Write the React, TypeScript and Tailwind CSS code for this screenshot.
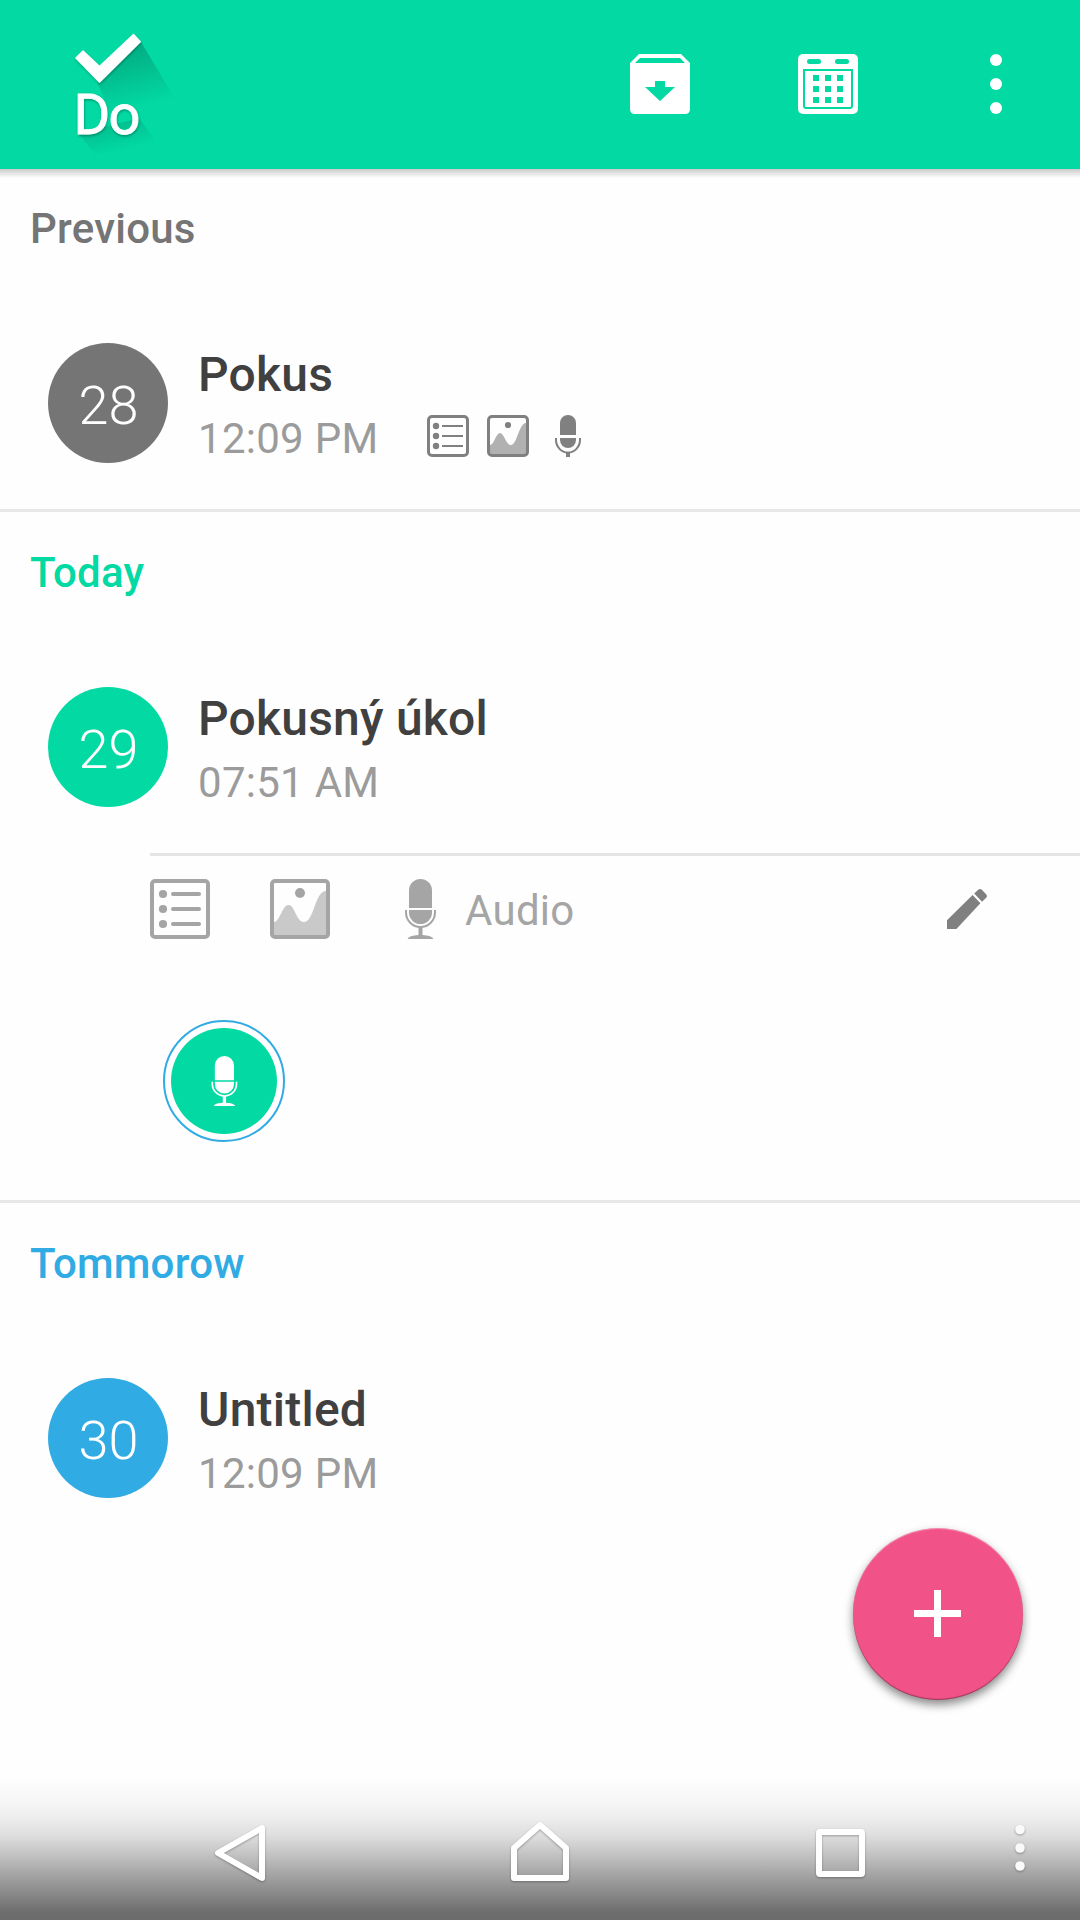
import React from "react";

type IconProps = { className?: string };

const Logo = () => (
  <svg className="w-[200px] h-[169px]" viewBox="0 0 200 169">
    <defs>
      <linearGradient id="checkShade" gradientUnits="userSpaceOnUse" x1="116" y1="58" x2="130" y2="110">
        <stop offset="0" stopColor="#000" stopOpacity="0.18" />
        <stop offset="1" stopColor="#000" stopOpacity="0" />
      </linearGradient>
      <linearGradient id="textShade" gradientUnits="userSpaceOnUse" x1="112" y1="118" x2="120" y2="151">
        <stop offset="0" stopColor="#000" stopOpacity="0.14" />
        <stop offset="1" stopColor="#000" stopOpacity="0" />
      </linearGradient>
      <filter id="soft" x="-20%" y="-20%" width="140%" height="140%">
        <feDropShadow dx="0.5" dy="1.5" stdDeviation="1.2" floodColor="#000" floodOpacity="0.3" />
      </filter>
    </defs>
    <path d="M141 42 L180 107 L114 121 L97 82 Z" fill="url(#checkShade)" />
    <path d="M139 118 L158 144 L96 156 L79 134 Z" fill="url(#textShade)" />
    <g fill="#fff" filter="url(#soft)">
      <path
        d="M76 58 L83 51 L99.5 66.5 L133.5 34.5 L140.2 41.7 L99.5 82 Z"
        stroke="#fff"
        strokeWidth="1.5"
        strokeLinejoin="round"
      />
      <text
        x="73.5"
        y="134"
        fontFamily="Roboto, sans-serif"
        fontWeight="400"
        fontSize="56"
        textLength="67"
        stroke="#fff"
        strokeWidth="0.8"
      >
        Do
      </text>
    </g>
  </svg>
);

const ArchiveIcon = () => (
  <svg className="w-[60px] h-[60px]" viewBox="0 0 60 60">
    <path
      fill="#fff"
      fillRule="evenodd"
      d="M9 0H51L60 9V55Q60 60 55 60H5Q0 60 0 55V9ZM10 4L5 9H55L50 4ZM25 27V33H15L30 47L45 33H35V27Z"
    />
  </svg>
);

const CalendarIcon = () => (
  <svg className="w-[60px] h-[60px]" viewBox="0 0 60 60">
    <rect width="60" height="60" rx="5" fill="#fff" />
    <g fill="#02d9a3">
      <rect x="9" y="5" width="14" height="5" rx="2.5" />
      <rect x="37" y="5" width="14" height="5" rx="2.5" />
      {[15, 27, 39].map((x) =>
        [21, 32, 43].map((y) => <rect key={`${x}-${y}`} x={x} y={y} width="6" height="6" />)
      )}
    </g>
    <path d="M6 16H54V52Q54 54 52 54H8Q6 54 6 52Z" fill="none" stroke="#02d9a3" strokeWidth="2" />
  </svg>
);

const MoreIcon = () => (
  <svg className="w-[12px] h-[60px]" viewBox="0 0 12 60" fill="#fff">
    <circle cx="6" cy="6" r="6" />
    <circle cx="6" cy="30" r="6" />
    <circle cx="6" cy="54" r="6" />
  </svg>
);

const SmallListIcon = () => (
  <svg className="w-[42px] h-[42px]" viewBox="0 0 42 42" fill="none" stroke="#808080">
    <rect x="1.5" y="1.5" width="39" height="39" rx="3.5" strokeWidth="3" />
    <path d="M15 11H36M15 21H36M15 31H36" strokeWidth="2" />
    <g fill="#808080" stroke="none">
      <circle cx="9" cy="11" r="3.2" />
      <circle cx="9" cy="21" r="3.2" />
      <circle cx="9" cy="31" r="3.2" />
    </g>
  </svg>
);

const SmallImageIcon = () => (
  <svg className="w-[42px] h-[42px]" viewBox="0 0 42 42">
    <path d="M3 30C7 30 9 18 13 18C17 18 19 30 24 30C30 30 32 8 39 8V39H3Z" fill="#b1b1b1" />
    <rect x="1.5" y="1.5" width="39" height="39" rx="3.5" fill="none" stroke="#808080" strokeWidth="3" />
    <circle cx="21" cy="10" r="3.1" fill="#808080" />
  </svg>
);

const SmallMicIcon = () => (
  <svg className="w-[42px] h-[42px]" viewBox="0 0 42 42" fill="#808080">
    <path d="M13 20V8A8 8 0 0 1 29 8V20ZM13 23H29V25A8 8 0 0 1 13 25ZM19 37H23V42H19Z" />
    <path d="M9 23V25A12 12.5 0 0 0 33 25V23" fill="none" stroke="#808080" strokeWidth="2" />
  </svg>
);

const ListIcon = () => (
  <svg className="w-[60px] h-[60px]" viewBox="0 0 60 60" fill="none" stroke="#a5a5a5" strokeWidth="4">
    <rect x="2" y="2" width="56" height="56" rx="3" />
    <path d="M23 15H49M23 30H49M23 45H49" strokeLinecap="round" />
    <g fill="#a5a5a5" stroke="none">
      <circle cx="13" cy="15" r="4.1" />
      <circle cx="13" cy="30" r="4.1" />
      <circle cx="13" cy="45" r="4.1" />
    </g>
  </svg>
);

const ImageIcon = () => (
  <svg className="w-[60px] h-[60px]" viewBox="0 0 60 60">
    <path d="M4 43C10 43 12 26 18.5 26C25 26 26 43 34 43C44 43 45 12 56 12V56H4Z" fill="#c9c9c9" />
    <rect x="2" y="2" width="56" height="56" rx="3" fill="none" stroke="#a5a5a5" strokeWidth="4" />
    <circle cx="30" cy="14" r="5" fill="#a5a5a5" />
  </svg>
);

const MicIcon = ({ className }: IconProps) => (
  <svg className={className} viewBox="0 0 60 60" fill="currentColor">
    <path d="M19 29V11.5A11.5 11.5 0 0 1 42 11.5V29ZM19 31H42V33.5A11.5 11.5 0 0 1 19 33.5ZM28.5 48H32.5V56Q42 56.5 43.5 60H17.5Q19 56.5 28.5 56Z" />
    <path d="M16 31V33.5A14.5 14.5 0 0 0 45 33.5V31" fill="none" stroke="currentColor" strokeWidth="2" />
  </svg>
);

const PencilIcon = () => (
  <svg className="w-[40px] h-[40px]" viewBox="0 0 40 40" fill="#808080">
    <path d="M0 31.2L25.6 6L33.4 14.2L9.4 40H0ZM27.2 4.4L31.2 0.8Q33 -0.6 34.8 0.8L39.2 5.2Q40.6 7 39.2 8.8L35 12.8Z" />
  </svg>
);

const smallIcons = (
  <div className="flex gap-[18px] ml-[47px] mb-[6px]">
    <SmallListIcon />
    <SmallImageIcon />
    <SmallMicIcon />
  </div>
);

type TaskProps = {
  day: string;
  title: string;
  time: string;
  color: string;
  icons?: React.ReactNode;
};

const Task = ({ day, title, time, color, icons }: TaskProps) => (
  <div className="flex h-[166px] pl-12">
    <div className={`flex items-center justify-center w-[120px] h-[120px] rounded-full shrink-0 ${color}`}>
      <span className="text-[54px] leading-[54px] font-light text-white pt-[5px] pl-px">{day}</span>
    </div>
    <div className="ml-[30px] pt-2">
      <h3 className="text-[48px] leading-[48px] font-medium tracking-[0.22px] text-[#404040]">{title}</h3>
      <div className="flex items-center mt-[19px] h-[42px]">
        <span className="w-[182px] whitespace-nowrap text-[42px] leading-[42px] tracking-[0.28px] text-[#9b9b9b]">
          {time}
        </span>
        {icons}
      </div>
    </div>
  </div>
);

const SectionTitle = ({ color, children }: { color: string; children: React.ReactNode }) => (
  <h2 className={`h-[175px] pt-[40px] pl-[30px] text-[42px] leading-[42px] font-medium tracking-[0.22px] ${color}`}>
    {children}
  </h2>
);

const App = () => {
  return (
    <div className="relative w-[1080px] h-[1920px] overflow-hidden bg-[#fefefe] font-[Roboto,sans-serif]">
      {/* Top bar */}
      <header className="relative z-10 flex justify-between h-[169px] bg-[#02d9a3]">
        <Logo />
        <div className="flex">
          <button className="flex items-start justify-center w-[168px] pt-[54px]">
            <ArchiveIcon />
          </button>
          <button className="flex items-start justify-center w-[168px] pt-[54px]">
            <CalendarIcon />
          </button>
          <button className="flex items-start justify-center w-[168px] pt-[54px]">
            <MoreIcon />
          </button>
        </div>
        <div className="absolute left-0 top-full w-full h-[9px] bg-linear-to-b from-black/20 to-transparent" />
      </header>

      <main className="-mt-px">
        <section className="border-b-3 border-[#e8e8e8]">
          <SectionTitle color="text-[#757575]">Previous</SectionTitle>
          <Task day="28" title="Pokus" time="12:09 PM" color="bg-[#757575]" icons={smallIcons} />
        </section>

        <section className="border-b-3 border-[#e8e8e8]">
          <SectionTitle color="text-[#02d9a3]">Today</SectionTitle>
          <Task day="29" title="Pokusný úkol" time="07:51 AM" color="bg-[#02d9a3]" />
          {/* Expanded attachments of the task */}
          <div className="ml-[150px] h-[347px] border-t-3 border-[#e4e4e4]">
            <div className="flex items-center pt-[23px] pr-[93px] text-[#a5a5a5]">
              <ListIcon />
              <div className="ml-[60px]">
                <ImageIcon />
              </div>
              <MicIcon className="w-[60px] h-[60px] ml-[60px]" />
              <span className="ml-[15px] pt-[3px] text-[42px] leading-[42px] tracking-[0.28px]">Audio</span>
              <button className="ml-auto">
                <PencilIcon />
              </button>
            </div>
            <button className="flex items-center justify-center w-[122px] h-[122px] mt-[81px] ml-[13px] rounded-full border-2 border-[#31abe3]">
              <span className="flex items-center justify-center w-[106px] h-[106px] rounded-full bg-[#02d9a3] text-white">
                <MicIcon className="w-[50px] h-[50px]" />
              </span>
            </button>
          </div>
        </section>

        <section>
          <SectionTitle color="text-[#31abe3]">Tommorow</SectionTitle>
          <Task day="30" title="Untitled" time="12:09 PM" color="bg-[#31abe3]" />
        </section>
      </main>

      {/* Add button */}
      <button className="absolute left-[853px] top-[1528px] flex items-center justify-center w-[170px] h-[172px] pr-px pb-px rounded-full bg-[#f15288] shadow-[0_5px_10px_rgba(0,0,0,0.45),inset_0_-1px_1px_rgba(0,0,0,0.35),inset_0_1px_1px_rgba(255,255,255,0.35)]">
        <svg className="w-[47px] h-[47px]" viewBox="0 0 47 47" fill="#fff">
          <path d="M20 0H27V20H47V27H27V47H20V27H0V20H20Z" />
        </svg>
      </button>

      {/* System navigation */}
      <nav className="absolute left-0 bottom-0 flex items-start w-full h-[144px] bg-[linear-gradient(to_bottom,rgba(0,0,0,0)_0px,rgba(0,0,0,0.03)_26px,rgba(0,0,0,0.07)_43px,rgba(0,0,0,0.13)_60px,rgba(0,0,0,0.22)_76px,rgba(0,0,0,0.32)_93px,rgba(0,0,0,0.42)_110px,rgba(0,0,0,0.51)_126px,rgba(0,0,0,0.57)_136px,rgba(0,0,0,0.58)_144px)]">
        <svg
          className="w-[60px] h-[66px] ml-[210px] mt-[44px] drop-shadow-[0_1px_1px_rgba(0,0,0,0.3)]"
          viewBox="210 1820 60 66"
          fill="none"
          stroke="#fff"
          strokeWidth="6"
          strokeLinejoin="round"
        >
          <path d="M262 1828V1878L218 1853Z" />
        </svg>
        <svg
          className="w-[70px] h-[70px] ml-[235px] mt-[41px] drop-shadow-[0_1px_1px_rgba(0,0,0,0.3)]"
          viewBox="505 1817 70 70"
          fill="none"
          stroke="#fff"
          strokeWidth="6"
          strokeLinejoin="round"
        >
          <path d="M514 1848L540 1825L566 1848V1878H514Z" />
        </svg>
        <svg
          className="w-[49px] h-[48px] ml-[241px] mt-[53px] drop-shadow-[0_1px_1px_rgba(0,0,0,0.3)]"
          viewBox="0 0 49 48"
          fill="none"
          stroke="#fff"
          strokeWidth="6"
        >
          <rect x="3" y="3" width="43" height="42" rx="1" />
        </svg>
        <svg
          className="w-[10px] h-[48px] ml-[149.5px] mt-[48px] drop-shadow-[0_1px_1px_rgba(0,0,0,0.3)]"
          viewBox="0 0 10 48"
          fill="#fafafa"
        >
          <circle cx="5" cy="5.5" r="4.8" />
          <circle cx="5" cy="24" r="4.8" />
          <circle cx="5" cy="42" r="4.8" />
        </svg>
      </nav>
    </div>
  );
};

export default App;
